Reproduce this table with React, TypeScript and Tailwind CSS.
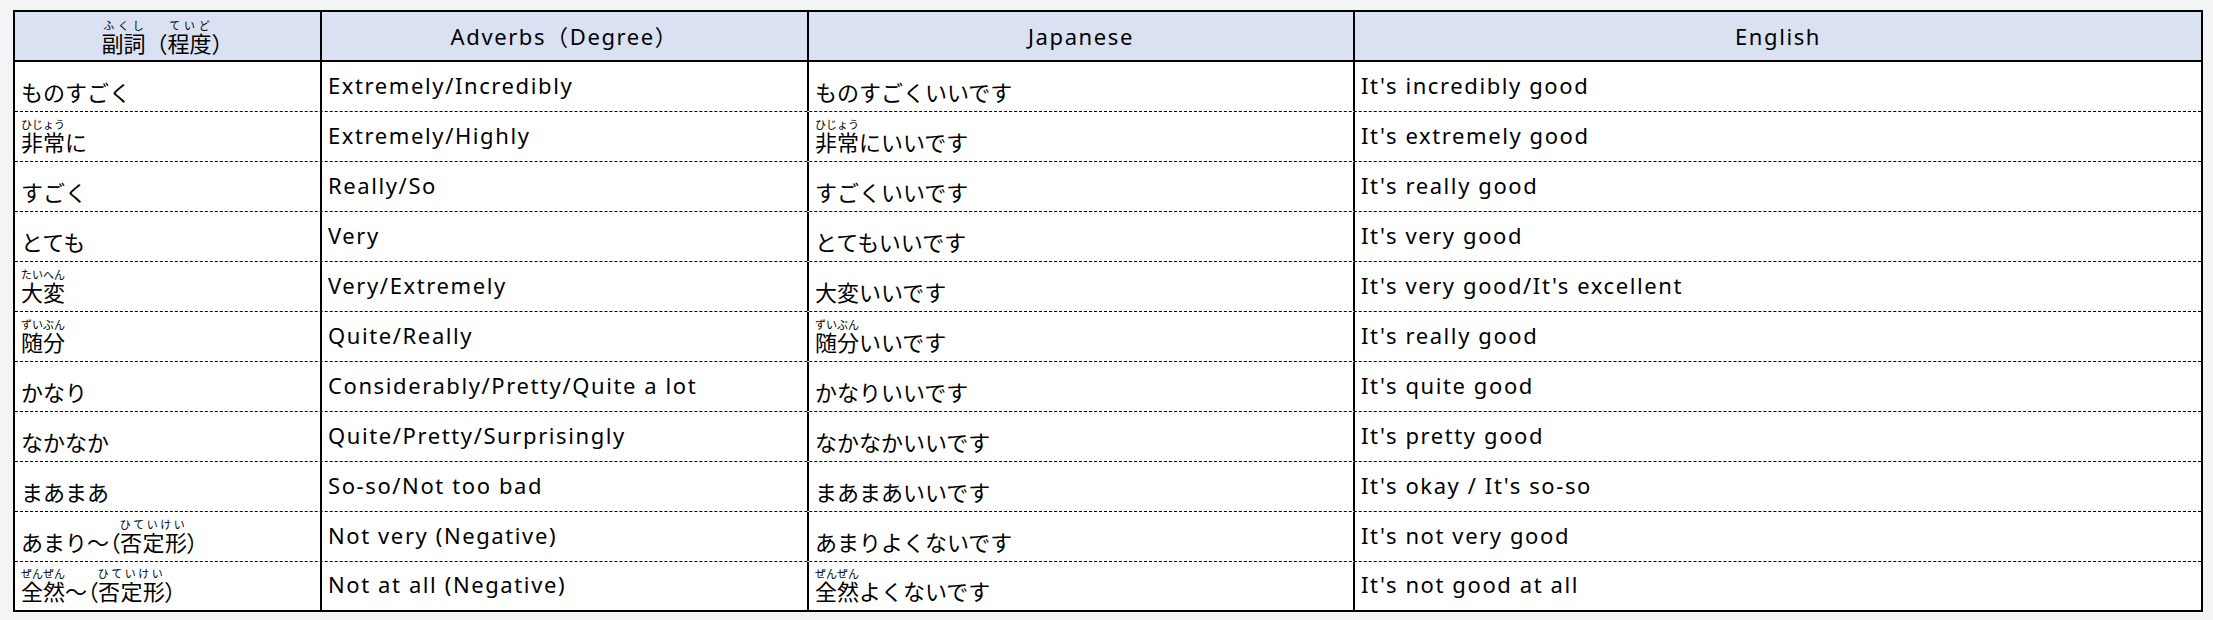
import React from 'react';

interface Row {
  word: React.ReactNode;
  adverb: string;
  japanese: React.ReactNode;
  english: string;
}

const Ruby: React.FC<{ base: string; reading: string; spread?: string }> = ({ base, reading, spread = '' }) => (
  <ruby className="[ruby-align:space-around]">
    {base}
    <rt className={`text-[11px] leading-[12px] ${spread}`}>{reading}</rt>
  </ruby>
);

// half-width brackets, like the proportional font in the sheet
const Paren: React.FC<{ ch: string }> = ({ ch }) => (
  <span className="[font-feature-settings:'palt']">{ch}</span>
);

const rows: Row[] = [
  { word: 'ものすごく', adverb: 'Extremely/Incredibly', japanese: 'ものすごくいいです', english: "It's incredibly good" },
  {
    word: <><Ruby base="非常" reading="ひじょう" />に</>,
    adverb: 'Extremely/Highly',
    japanese: <><Ruby base="非常" reading="ひじょう" />にいいです</>,
    english: "It's extremely good"
  },
  { word: 'すごく', adverb: 'Really/So', japanese: 'すごくいいです', english: "It's really good" },
  { word: 'とても', adverb: 'Very', japanese: 'とてもいいです', english: "It's very good" },
  {
    word: <Ruby base="大変" reading="たいへん" />,
    adverb: 'Very/Extremely',
    japanese: '大変いいです',
    english: "It's very good/It's excellent"
  },
  {
    word: <Ruby base="随分" reading="ずいぶん" />,
    adverb: 'Quite/Really',
    japanese: <><Ruby base="随分" reading="ずいぶん" />いいです</>,
    english: "It's really good"
  },
  { word: 'かなり', adverb: 'Considerably/Pretty/Quite a lot', japanese: 'かなりいいです', english: "It's quite good" },
  { word: 'なかなか', adverb: 'Quite/Pretty/Surprisingly', japanese: 'なかなかいいです', english: "It's pretty good" },
  { word: 'まあまあ', adverb: 'So-so/Not too bad', japanese: 'まあまあいいです', english: "It's okay / It's so-so" },
  {
    word: <>あまり〜<Paren ch="（" /><Ruby base="否定形" reading="ひていけい" spread="tracking-[2.5px]" /><Paren ch="）" /></>,
    adverb: 'Not very (Negative)',
    japanese: 'あまりよくないです',
    english: "It's not very good"
  },
  {
    word: <><Ruby base="全然" reading="ぜんぜん" />〜<Paren ch="（" /><Ruby base="否定形" reading="ひていけい" spread="tracking-[2.5px]" /><Paren ch="）" /></>,
    adverb: 'Not at all (Negative)',
    japanese: <><Ruby base="全然" reading="ぜんぜん" />よくないです</>,
    english: "It's not good at all"
  }
];

const App: React.FC = () => {
  return (
    <div className="min-h-screen bg-[#f3f4f6] pt-[10px] pl-[13px] pr-[10px] font-['Noto_Sans','Noto_Sans_CJK_JP',sans-serif] text-[22px] leading-[22px] text-black">
      <div className="w-[2190px] border-2 border-black bg-white">
        {/* header */}
        <div className="grid h-[50px] grid-cols-[307px_487px_546px_846px] border-b-2 border-black bg-[#d9e1f2]">
          <div className="flex items-end justify-center border-r-2 border-black pb-[6px]">
            <span>
              <Ruby base="副詞" reading="ふくし" />（<Ruby base="程度" reading="ていど" />）
            </span>
          </div>
          <div className="flex items-center justify-center border-r-2 border-black tracking-[1.6px]">
            Adverbs（Degree）
          </div>
          <div className="flex items-center justify-center border-r-2 border-black tracking-[1.6px]">
            Japanese
          </div>
          <div className="flex items-center justify-center tracking-[1.6px]">English</div>
        </div>

        {rows.map((row, i) => {
          const last = i === rows.length - 1;
          const line = last ? 'h-[48px]' : 'h-[50px] border-b border-dashed border-b-black';
          return (
            <div key={i} className={`grid grid-cols-[307px_487px_546px_846px] ${line}`}>
              <div className="flex items-end border-r-2 border-r-black pb-[8.5px] pl-[6px]">
                <span>{row.word}</span>
              </div>
              <div className="flex items-end border-r-2 border-r-black pb-[15px] pl-[6px] tracking-[1.6px]">
                {row.adverb}
              </div>
              <div className="flex items-end border-r-2 border-r-black pb-[8.5px] pl-[6px]">
                <span>{row.japanese}</span>
              </div>
              <div className="flex items-end pb-[15px] pl-[6px] tracking-[1.6px]">{row.english}</div>
            </div>
          );
        })}
      </div>
    </div>
  );
};

export default App;
